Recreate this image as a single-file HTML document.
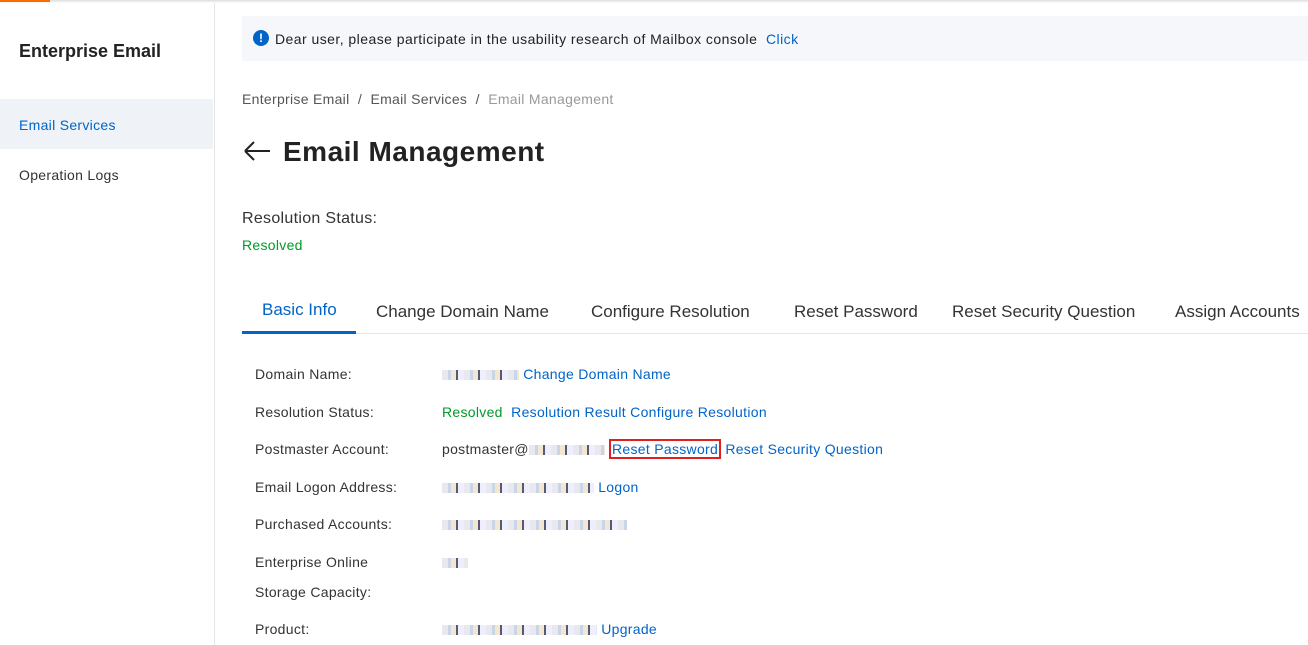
<!DOCTYPE html>
<html><head><meta charset="utf-8"><style>
*{margin:0;padding:0;box-sizing:border-box}
body{width:1308px;height:645px;overflow:hidden;background:#fff;font-family:"Liberation Sans",sans-serif;color:#333;position:relative}
.top{position:absolute;left:0;top:0;width:1308px;height:3px;background:linear-gradient(#ddd,#fff)}
.org{position:absolute;left:0;top:0;width:50px;height:2px;background:#ff6a00}
.side{position:absolute;left:0;top:3px;width:215px;height:642px;border-right:1px solid #e5e5e5}
.a{position:absolute;font-size:14px;white-space:nowrap;letter-spacing:0.3px}
.blue{color:#0064c8}.green{color:#009a29}
.blur{display:inline-block;height:10px;vertical-align:middle;background:repeating-linear-gradient(90deg,#e8e8ef 0 6px,#c9d6ea 6px 9px,#f3e6d3 9px 14px,#555a70 14px 16px,#eef 16px 22px)}
</style></head><body>
<div class="top"></div><div class="org"></div>
<div class="side"></div>
<div class="a" style="left:19px;top:41px;font-size:18px;font-weight:bold;color:#222;letter-spacing:0">Enterprise Email</div>
<div style="position:absolute;left:0;top:99px;width:213px;height:50px;background:#eff2f6"></div>
<div class="a blue" style="left:19px;top:117px">Email Services</div>
<div class="a" style="left:19px;top:167px">Operation Logs</div>

<div style="position:absolute;left:242px;top:16px;width:1066px;height:45px;background:#f5f7fa"></div>
<div style="position:absolute;left:253px;top:30px;width:16px;height:16px;border-radius:50%;background:#0064c8;color:#fff;font-size:12px;font-weight:bold;text-align:center;line-height:16px">!</div>
<div class="a" style="left:275px;top:31px;color:#222;letter-spacing:0.45px">Dear user, please participate in the usability research of Mailbox console &nbsp;<span class="blue">Click</span></div>

<div class="a" style="left:242px;top:91px;color:#555">Enterprise Email &nbsp;/&nbsp; Email Services &nbsp;/&nbsp; <span style="color:#999">Email Management</span></div>
<svg style="position:absolute;left:242px;top:139px" width="30" height="24"><path d="M3 12H28M3 12L12 3M3 12L12 21" stroke="#222" stroke-width="2" fill="none"/></svg>
<div class="a" style="left:283px;top:136px;font-size:28px;font-weight:bold;color:#222;letter-spacing:0.5px">Email Management</div>

<div class="a" style="left:242px;top:210px;font-size:16px">Resolution Status:</div>
<div class="a green" style="left:242px;top:237px">Resolved</div>

<div style="position:absolute;left:242px;top:333px;width:1066px;height:1px;background:#e5e5e5"></div>
<div style="position:absolute;left:242px;top:331px;width:114px;height:3px;background:#0064c8"></div>
<div class="a blue" style="left:262px;top:300px;font-size:17px;letter-spacing:0">Basic Info</div>
<div class="a" style="left:376px;top:302px;font-size:17px;letter-spacing:0">Change Domain Name</div>
<div class="a" style="left:591px;top:302px;font-size:17px;letter-spacing:0">Configure Resolution</div>
<div class="a" style="left:794px;top:302px;font-size:17px;letter-spacing:0">Reset Password</div>
<div class="a" style="left:952px;top:302px;font-size:17px;letter-spacing:0">Reset Security Question</div>
<div class="a" style="left:1175px;top:302px;font-size:17px;letter-spacing:0">Assign Accounts</div>

<div class="a" style="left:255px;top:366px">Domain Name:</div>
<div class="a" style="left:442px;top:366px"><span class="blur" style="width:77px"></span> <span class="blue">Change Domain Name</span></div>
<div class="a" style="left:255px;top:404px">Resolution Status:</div>
<div class="a" style="left:442px;top:404px"><span class="green">Resolved</span>&nbsp; <span class="blue">Resolution Result&nbsp;Configure Resolution</span></div>
<div class="a" style="left:255px;top:441px">Postmaster Account:</div>
<div class="a" style="left:442px;top:441px">postmaster@<span class="blur" style="width:76px"></span> <span class="blue" style="border:2px solid #e02020;padding:0 1px">Reset Password</span> <span class="blue">Reset Security Question</span></div>
<div class="a" style="left:255px;top:479px">Email Logon Address:</div>
<div class="a" style="left:442px;top:479px"><span class="blur" style="width:152px"></span> <span class="blue">Logon</span></div>
<div class="a" style="left:255px;top:516px">Purchased Accounts:</div>
<div class="a" style="left:442px;top:516px"><span class="blur" style="width:185px"></span></div>
<div class="a" style="left:255px;top:554px">Enterprise Online</div>
<div class="a" style="left:255px;top:584px">Storage Capacity:</div>
<div class="a" style="left:442px;top:554px"><span class="blur" style="width:26px"></span></div>
<div class="a" style="left:255px;top:621px">Product:</div>
<div class="a" style="left:442px;top:621px"><span class="blur" style="width:155px"></span> <span class="blue">Upgrade</span></div>
</body></html>
